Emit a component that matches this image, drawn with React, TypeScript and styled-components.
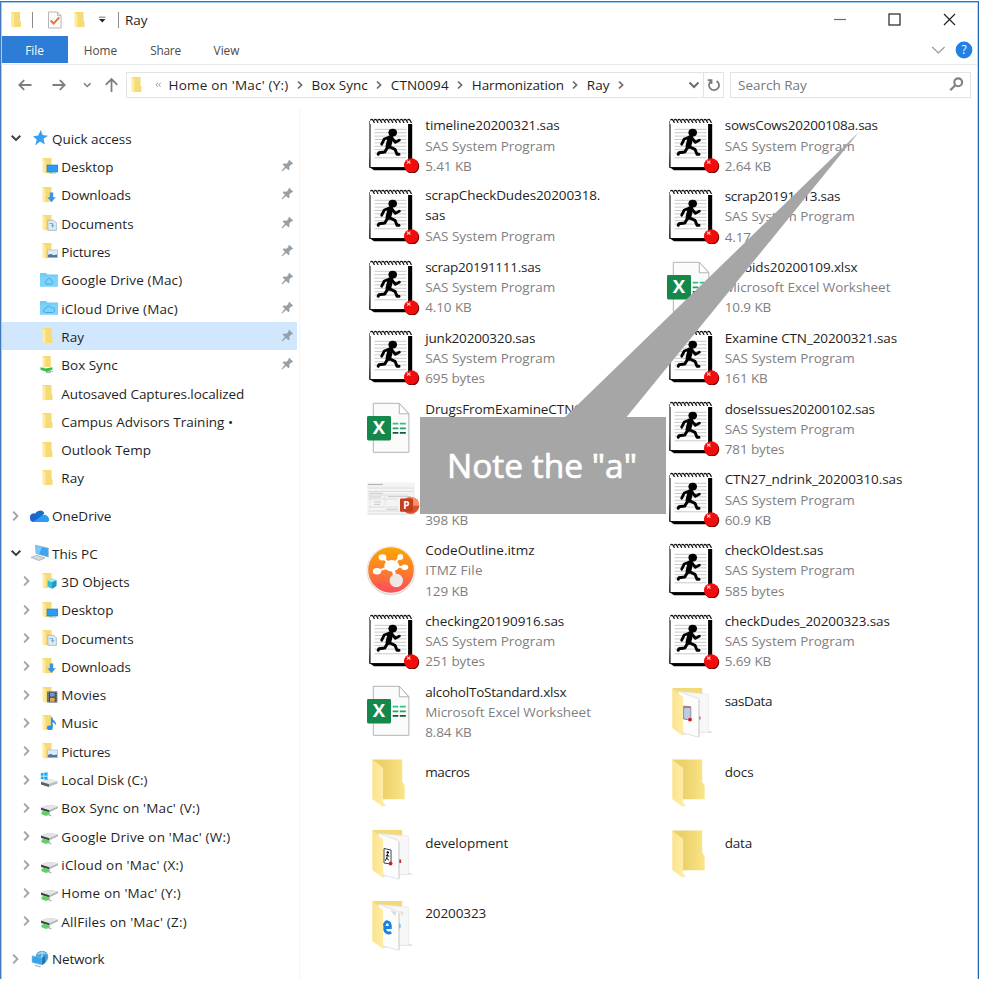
import React from 'react';
import styled, { createGlobalStyle } from 'styled-components';

const GlobalStyle = createGlobalStyle`
  * { box-sizing: border-box; }
  body { margin: 0; background: #fff; overflow: hidden; }
  svg { display: block; flex: none; }
`;

const Page = styled.div`
  width: 981px;
  height: 981px;
  padding: 1px 2px 2px 0;
  background: #fff;
  font-family: 'Open Sans', 'Noto Sans', sans-serif;
  font-size: 13.5px;
  color: #1f1f1f;
`;

const Window = styled.div`
  position: relative;
  height: 978px;
  display: flex;
  flex-direction: column;
  overflow: hidden;
  background: #fff;
  border-top: 1px solid #3170b3;
  border-left: 1px solid #4479bb;
  border-right: 1px solid #2465b0;
  box-shadow: inset 1px 1px 0 #a3cdf5, inset -1px 0 0 #b9dcfa;
`;

const Label = styled.span<{ $ls?: number }>`
  white-space: pre;
  letter-spacing: ${p => p.$ls ?? 0}px;
`;

/* ---------- title bar ---------- */

const TitleBar = styled.header`
  height: 34px;
  display: flex;
  align-items: center;
  padding: 2px 21px 0 9px;
`;

const Divider = styled.span`
  width: 1px;
  height: 16px;
  background: #8c8c8c;
`;

const QuickTools = styled.div`
  display: flex;
  align-items: center;
  flex: 1;
`;

const ToolSlot = styled.span<{ $w: number; $indent?: number }>`
  width: ${p => p.$w}px;
  padding-left: ${p => p.$indent ?? 0}px;
  display: flex;
  align-items: center;
`;

const WindowControls = styled.div`
  display: flex;
  gap: 41px;
  align-items: center;
  padding-bottom: 1px;
`;

/* ---------- ribbon ---------- */

const Ribbon = styled.nav`
  height: 29px;
  display: flex;
  align-items: center;
  border-bottom: 1px solid #e8e9ea;
  padding: 0 4px 1px 1px;
  font-size: 11.8px;
  color: #4b4b4b;
  margin-right: 1px;
`;

const FileTab = styled.div`
  width: 66px;
  height: 27px;
  display: flex;
  align-items: center;
  justify-content: center;
  padding-right: 1px;
  background: #2d7dd7;
  color: #fff;
`;

const Tab = styled.div<{ $w: number }>`
  width: ${p => p.$w}px;
  text-align: center;
  padding-top: 1px;
`;

const RibbonEnd = styled.div`
  margin-left: auto;
  display: flex;
  align-items: center;
  gap: 9px;
`;

/* ---------- address row ---------- */

const AddressRow = styled.div`
  height: 42px;
  display: flex;
  align-items: center;
  padding: 0 6px 3px 0;
`;

const NavButtons = styled.div`
  width: 125px;
  padding-left: 16px;
  display: flex;
  align-items: center;
`;

const AddressBox = styled.div`
  width: 598px;
  height: 26px;
  display: flex;
  align-items: center;
  border: 1px solid #e3e3e3;
`;

const Crumb = styled.span`
  display: flex;
  align-items: center;
  line-height: 24px;
`;

const CrumbSeparator = styled.span`
  width: 23px;
  display: flex;
  justify-content: center;
  padding-top: 1px;
`;

const AddressEnd = styled.div`
  margin-left: auto;
  display: flex;
  align-items: center;
  height: 100%;
`;

const RefreshCell = styled.div`
  width: 20px;
  height: 100%;
  margin-left: 3px;
  display: flex;
  align-items: center;
  justify-content: center;
  border-left: 1px solid #e3e3e3;
`;

const SearchBox = styled.div`
  width: 241px;
  height: 26px;
  margin-left: 6px;
  padding: 0 6px 0 7px;
  display: flex;
  align-items: center;
  justify-content: space-between;
  border: 1px solid #e3e3e3;
  color: #787878;
`;

/* ---------- body ---------- */

const Body = styled.div`
  flex: 1;
  min-height: 0;
  display: flex;
`;

const Sidebar = styled.aside`
  width: 299px;
  border-right: 1px solid #f3f5f7;
  padding: 16.4px 2px 0 1px;
`;

const TreeGroup = styled.div`
  margin-bottom: 9.2px;
`;

const TreeRow = styled.div<{ $level: number; $selected?: boolean }>`
  height: 28.33px;
  display: flex;
  align-items: center;
  padding: 2px 3px 0 ${p => (p.$level ? 18.5 : 7)}px;
  background: ${p => (p.$selected ? '#d0e7fe' : 'transparent')};
`;

const ChevronSlot = styled.span<{ $level: number }>`
  width: ${p => (p.$level ? 19.5 : 21)}px;
  padding-left: ${p => (p.$level ? 0 : 1)}px;
  padding-bottom: 1px;
`;

const TreeIcon = styled.span<{ $level: number }>`
  width: ${p => (p.$level ? 21.3 : 22)}px;
  padding-bottom: 1px;
`;

const PinSlot = styled.span`
  margin-left: auto;
  padding-bottom: 3px;
`;

const FileArea = styled.main`
  display: grid;
  grid-template-columns: 299.5px 299.5px;
  grid-auto-rows: 70.8px;
  padding: 3.1px 0 0 66px;
`;

const FileItem = styled.div`
  display: flex;
  padding-top: 6.9px;
  gap: 5.2px;
`;

const FileText = styled.div<{ $folder?: boolean }>`
  margin-top: ${p => (p.$folder ? 7.6 : -1.6)}px;
  line-height: 20.2px;
`;

const FileName = styled.div<{ $wrapped?: boolean }>`
  line-height: ${p => (p.$wrapped ? 19.7 : 20.2)}px;
`;

const Meta = styled.div`
  color: #7f7f7f;
`;

/* ---------- callout ---------- */

const Callout = styled.div`
  position: absolute;
  left: 419px;
  top: 130px;
  width: 440px;
  height: 382px;
  pointer-events: none;
`;

const Pointer = styled.svg`
  position: absolute;
  inset: 0;
`;

const CalloutBox = styled.div`
  position: absolute;
  left: 0;
  bottom: 0;
  width: 246px;
  height: 97px;
  display: flex;
  align-items: center;
  justify-content: center;
  padding: 0 2px 2px 0;
  background: #a6a6a6;
  color: #fff;
  font-size: 33.5px;
  -webkit-text-stroke: 0.7px #fff;
`;

/* ---------- icons ---------- */

const FolderShape = () => (
  <g>
    <path d="M2.5 1h9v8.5l1 1.5v5h-8z" fill="#f5da75" />
    <path d="M2.5 1l3 2.2V17l-3-1.8z" fill="#fdeb9f" />
  </g>
);

const Svg18 = ({ children }: { children?: React.ReactNode }) => (
  <svg width="18" height="18" viewBox="0 0 18 18">{children}</svg>
);

const treeIcons: Record<string, React.ReactNode> = {
  folder: <FolderShape />,
  desktop: (
    <>
      <FolderShape />
      <rect x="7" y="8" width="11" height="7" fill="#2b9bf4" stroke="#1b7bd0" strokeWidth=".6" />
      <path d="M9 16h7" stroke="#6fa8d8" strokeWidth=".8" />
    </>
  ),
  downloads: (
    <>
      <FolderShape />
      <path d="M9.8 6.5h3.4v4.7h2.6L11.5 16 7.2 11.2h2.6z" fill="#3a93e6" />
    </>
  ),
  documents: (
    <>
      <FolderShape />
      <path d="M7.8 6.3h6l2.6 2.6v7.4H7.8z" fill="#e3e9ee" stroke="#a5b0b8" strokeWidth=".8" />
      <path d="M9.5 9.5h3.2M11.2 11.500h3M12.600 9.500v4" stroke="#63b3e2" strokeWidth="1.2" />
    </>
  ),
  pictures: (
    <>
      <FolderShape />
      <rect x="7.5" y="8" width="10" height="7.6" fill="#d9ebfb" stroke="#b6c0c8" strokeWidth=".8" />
      <path d="M8 15.2v-2.400l3.200-.8 2.300 1.200 3.500-.8v2.800z" fill="#54748f" />
    </>
  ),
  cube: (
    <>
      <FolderShape />
      <path d="M12 6.5l4.4 1.8v5.8L12 16.8l-4.4-2.5V8.4z" fill="#35bdd9" />
      <path d="M12 6.5l4.4 1.8L12 10.2 7.6 8.4z" fill="#a3e8f3" />
      <path d="M12 10.2l4.4-1.9v5.8L12 16.8z" fill="#1c9cbf" />
    </>
  ),
  movies: (
    <>
      <FolderShape />
      <rect x="7.3" y="5.5" width="10" height="11" fill="#44484f" />
      <path d="M8.4 6v10M16.2 6v10" stroke="#a8a8a8" strokeWidth="1" strokeDasharray="1.2 1" />
      <rect x="10" y="6.6" width="4.7" height="4" fill="#6f96d5" />
      <rect x="10" y="11.8" width="4.7" height="4" fill="#dfaa45" />
    </>
  ),
  music: (
    <>
      <FolderShape />
      <path d="M11.8 3.5v9.7" stroke="#2d90ea" strokeWidth="1.8" />
      <path d="M11.2 3c.6 3 5.6 3.6 4.9 8.6-1-2.4-2.6-3.4-4.9-4.2z" fill="#2d90ea" />
      <ellipse cx="9.8" cy="13.7" rx="2.9" ry="2.3" fill="#2d90ea" />
    </>
  ),
  gdrive: (
    <>
      <path d="M0 2h6l1.5 1.5H18V15.500H0z" fill="#6fcdf8" />
      <path d="M0 5.500h18v10H0z" fill="#7dd3fb" />
      <path d="M8 7.500h2.200l2.800 4-1.100 1.600H6.300l-1.100-1.800z" fill="none" stroke="#48aadf" strokeWidth="1" />
    </>
  ),
  icloud: (
    <>
      <path d="M0 2h6l1.5 1.5H18V15.500H0z" fill="#6fcdf8" />
      <path d="M0 5.500h18v10H0z" fill="#7dd3fb" />
      <path d="M5.5 13.500a2 2 0 0 1 .2-4 3 3 0 0 1 5.6-.8 2.5 2.5 0 0 1 1.6 4.8z" fill="none" stroke="#48aadf" strokeWidth="1" />
    </>
  ),
  boxsync: (
    <>
      <path d="M2.8 0h8v11h-8z" fill="#f5da75" />
      <path d="M2.8 0l2.5 2v11.5l-2.5-2z" fill="#fdeb9f" />
      <path d="M.5 11.200l5 1.400L12.500 11.200v2.400L7 16 .5 13.800z" fill="#38bd49" />
      <path d="M8 15.400h5M6 16.600h5" stroke="#aab2b7" strokeWidth="1" />
    </>
  ),
  star: <path d="M10.8 1l1.8 5 5.4.7-4.5 3.1 1.4 5.6-4.8-2.8-4.9 3.9 1.6-5.8L3 7.3l5.2-.7z" fill="#36a0f2" />,
  onedrive: (
    <>
      <path d="M5 7.5A5.2 5.2 0 0 1 14.4 6l-3 4L3 12z" fill="#1470c8" />
      <path d="M0 11a4 4 0 0 1 6-4.2l9 6L3.5 15A3.9 3.9 0 0 1 0 11z" fill="#1b66cf" />
      <path d="M3 15l8.7-6.3A4.3 4.3 0 0 1 18.6 11a2.4 2.4 0 0 1-1.3 4z" fill="#2b9df0" />
    </>
  ),
  pc: (
    <>
      <path d="M5.5 1.2l12.8 3V13L6 9.6z" fill="#3ba5ee" stroke="#8aa6ba" strokeWidth=".6" />
      <path d="M6 1.8l6 1.4L9 10.2 6.4 9.4z" fill="#7cc9fb" />
      <path d="M1 13.4l6-2 8 2.6-6 2.5z" fill="#d2d8dc" stroke="#9ba5ac" strokeWidth=".7" />
    </>
  ),
  network: (
    <>
      <circle cx="12" cy="7" r="6.200" fill="#4aa3d8" />
      <path d="M8 4.5c2-2.3 5-2 7.5-.8M12 1.2v8" stroke="#b9def2" strokeWidth="1.2" fill="none" />
      <path d="M2 5.8l10 2V15L2 12.4z" fill="#37a4ea" stroke="#8ec9ee" strokeWidth=".6" />
      <path d="M12 7.8l3.4-2.2V13L12 15z" fill="#2178b5" />
      <path d="M5 15.5l5.5 1.3" stroke="#a9b3b9" strokeWidth="1.2" />
    </>
  ),
  disk: (
    <>
      <path d="M1 10.5L9 8l8.5 2.2v2.4L9 15.8l-8-2.4z" fill="#b9bcbf" />
      <path d="M1 10.3L9 8l8.5 2L9 13z" fill="#e9eaeb" />
      <path d="M1 11l8 2.3v2.6l-8-2.4z" fill="#5c6166" />
      <path d="M.8 2.2l2.8-.4v3H.8zM4.2 1.7l3.4-.5v3.6H4.2zM.8 5.4h2.8v3L.8 8zM4.2 5.4h3.4V9l-3.4-.5z" fill="#19aef0" />
    </>
  ),
  netdrive: (
    <>
      <path d="M1 8.200L9 6l9 1.300v2L9.200 13.600 1 11z" fill="#b5b8ba" />
      <path d="M1 8.400L9 6l9 1.300-8.800 3.900z" fill="#e4e5e6" />
      <path d="M1 8.800l8.200 2.400v2L1 10.800z" fill="#3c4043" />
      <path d="M1.500 13l2-1.200 6.300 1.800v1.800L6 17l-4.500-1.800z" fill="#62d069" />
      <path d="M8.500 16l3 .8" stroke="#b0b5b8" strokeWidth="1.2" />
    </>
  ),
};

const Chevron = ({ open }: { open?: boolean }) =>
  open ? (
    <svg width="12" height="12" viewBox="0 0 12 12">
      <path d="M1.7 3.8L6 8l4.3-4.2" fill="none" stroke="#3b3b3b" strokeWidth="1.9" />
    </svg>
  ) : (
    <svg width="12" height="12" viewBox="0 0 12 12">
      <path d="M3.2 1.7L7.4 6l-4.2 4.3" fill="none" stroke="#a3a3a3" strokeWidth="1.9" />
    </svg>
  );

const Pin = () => (
  <svg width="13" height="13" viewBox="0 0 13 13">
    <path d="M8.2.7l4 4-1.4.9-.5-.2-2 2.2.2 2.7-1 1-2.4-2.4L1.2 12.4l-.6-.6 3.3-4L1.6 5.5l1-1 2.9.2 2-2-.2-.7z" fill="#96a0a9" />
  </svg>
);

const SasIcon = () => (
  <svg width="54" height="56" viewBox="0 0 54 56">
    <path d="M5 6h41.200v47.300H8L3.300 50z" fill="#000" />
    <path d="M4 4.500h38.600v46H4z" fill="#fff" stroke="#111" strokeWidth="1.1" />
    <path
      d="M8.500 12.300h32M8.500 15.700h32M8.500 19.100h32M8.500 22.500h32M8.500 25.900h32M8.500 29.300h32M8.500 32.700h32M8.500 36.100h32M8.500 40.800h32"
      stroke="#c9c9c9"
      strokeWidth="1"
    />
    <path d="M4 4.600h43" stroke="#fff" strokeWidth="5" />
    {Array.from({ length: 11 }, (_, i) => (
      <path key={i} d={`M${4.400 + i * 3.700} 3.400q1.400-2.200 2.700 0t1.300 2.700`} fill="none" stroke="#111" strokeWidth="1.15" />
    ))}
    <ellipse cx="26.700" cy="15.600" rx="4.300" ry="3.900" fill="#000" />
    <g fill="none" stroke="#000" strokeLinecap="round" strokeLinejoin="round">
      <path d="M24.400 21L22.400 29" strokeWidth="5.600" />
      <path d="M22.800 20.300l-4.500 1.700-2.600 5.200M25.600 20.600l3.800 4.800 4-2.300" strokeWidth="2.800" />
      <path d="M23 29.500l6 2.800 2 5h2M22 29.500l-3.200 5.600-5.800.6-.8 1.500" strokeWidth="3" />
    </g>
    <circle cx="46" cy="49.400" r="7.200" fill="#650000" />
    <circle cx="45.200" cy="48.400" r="7.200" fill="#f40b0b" />
    <path d="M40.900 43.600l3.600 3M44.300 43.700l-3.200 2.900" stroke="#ffd5d5" strokeWidth="1.100" />
  </svg>
);

const ExcelIcon = () => (
  <svg width="54" height="56" viewBox="0 0 54 56">
    <path d="M7.3 3.3h26l9.600 10.500v38.500H7.300z" fill="#fbfbfb" stroke="#b2b2b2" />
    <path d="M33.300 3.300v10.500h9.600z" fill="#fff" stroke="#b2b2b2" />
    <rect x="1" y="16" width="24" height="24.400" rx="1.400" fill="#14884a" />
    <text x="13" y="34.400" textAnchor="middle" fontSize="18.500" fontWeight="700" fill="#fff">X</text>
    <path d="M26.700 23.700h5.600M33.800 23.700h6" stroke="#2cc481" strokeWidth="1.800" />
    <path d="M26.700 28.300h5.600M33.800 28.300h6" stroke="#20a366" strokeWidth="1.800" />
    <path d="M26.700 32.900h5.600M33.800 32.900h6" stroke="#145b38" strokeWidth="1.800" />
  </svg>
);

const PowerPointIcon = () => (
  <svg width="54" height="56" viewBox="0 0 54 56">
    <path d="M1 11.500h48v32.500H1z" fill="#f4f4f4" />
    <path d="M2 13.500h15" stroke="#b5b5b5" strokeWidth="1.200" />
    <path d="M2 17h46M2 20.500h46M2 24h40M2 28h30M2 36h30M2 40h46M2 43h46" stroke="#dadada" strokeWidth=".9" />
    <path d="M3 22.300h14M22 25.600h22M3 26h12M8 31h7M8 33.400h6M20 38.300h12" stroke="#c0c0c0" strokeWidth=".8" />
    <path d="M4 20v18M19 24v10" stroke="#e0e0e0" strokeWidth=".8" />
    <circle cx="44.600" cy="34.400" r="8.700" fill="#ee6c47" />
    <path d="M44.600 25.700a8.700 8.700 0 0 1 8.700 8.700h-8.700z" fill="#ff8f6b" />
    <path d="M36 35h17.200a8.700 8.700 0 0 1-17.200 0z" fill="#d35230" />
    <rect x="34" y="27.500" width="13" height="13.300" rx="1" fill="#c43e1c" />
    <text x="40.400" y="38" textAnchor="middle" fontSize="10" fontWeight="700" fill="#fff">P</text>
  </svg>
);

const MindMapIcon = () => (
  <svg width="54" height="56" viewBox="0 0 54 56">
    <defs>
      <linearGradient id="mindmap" x1="0" y1="0" x2="0" y2="1">
        <stop offset="0" stopColor="#fda501" />
        <stop offset=".55" stopColor="#fb7c2e" />
        <stop offset="1" stopColor="#fd4a5e" />
      </linearGradient>
    </defs>
    <circle cx="25" cy="28.600" r="24.400" fill="#d5d5d5" />
    <circle cx="25" cy="28" r="24" fill="#f1eeec" />
    <circle cx="25" cy="28" r="22.800" fill="url(#mindmap)" />
    <g stroke="#fff" strokeWidth="2">
      <path d="M25.700 24L16.700 15.500M25.700 24l8.600-9M25.700 24l13 1.200M25.700 24L11 29.200" />
      <path d="M26 24l4 14" strokeWidth="3" />
    </g>
    <g fill="#fff">
      <ellipse cx="25.700" cy="23.700" rx="7.400" ry="5.800" />
      <ellipse cx="16.500" cy="15.300" rx="3.900" ry="3.100" />
      <circle cx="34.300" cy="14.900" r="2.900" />
      <ellipse cx="38.700" cy="25.200" rx="3.500" ry="2.700" />
      <ellipse cx="11" cy="29.200" rx="4.100" ry="3.300" />
      <circle cx="30.300" cy="38.500" r="6.700" fill="#eee7e4" />
    </g>
  </svg>
);

type FolderContent = 'none' | 'data' | 'runner' | 'edge';

const BigFolder = ({ content }: { content: FolderContent }) => (
  <svg width="54" height="56" viewBox="0 0 54 56">
    <defs>
      <linearGradient id="folderBack" x1="0" y1="0" x2="1" y2="0">
        <stop offset=".3" stopColor="#ecd068" />
        <stop offset="1" stopColor="#fae588" />
      </linearGradient>
      <linearGradient id="folderFlap" x1="0" y1="0" x2="1" y2="0">
        <stop offset="0" stopColor="#fbe38b" />
        <stop offset="1" stopColor="#feeda6" />
      </linearGradient>
    </defs>
    <path d="M16 52.500l4-1-3-3z" fill="#e6e6e6" />
    {content === 'none' ? (
      <path d="M6.500 5.600h29.700v22.200l2.500 3.600v13.800H14z" fill="url(#folderBack)" />
    ) : (
      <>
        <path d="M6.500 5h29.700v12H8z" fill="#f3da79" />
        <path d="M32 49.700h15l-3-2z" fill="#dedede" />
        <path d="M14 8.600l28.600 2.600v38.200H20z" fill="#f7f7f7" stroke="#e3e3e3" strokeWidth=".6" />
        {content === 'edge' && <path d="M33 15l3.500 5 1.500-4z" fill="#e2e2e2" />}
        <path d="M12 8l20.600 7.600v38.600L17 50z" fill="#fdfdfd" stroke="#dcdcdc" strokeWidth=".8" />
        <path d="M33.300 17v37" stroke="#dadada" strokeWidth="1.100" />
      </>
    )}
    {content === 'runner' && (
      <>
        <path d="M18 23.500l7 1.500v14l-7-1z" fill="#fff" stroke="#444" strokeWidth="1" />
        <circle cx="21.800" cy="27.400" r="1.200" />
        <path d="M21.600 29l-.8 4M19.800 30.200l3.600 1M20.800 33l1.800 2.400M20.600 33l-1.200 2.800" stroke="#111" strokeWidth="1" />
        <circle cx="24.600" cy="38.500" r="1.900" fill="#e8141b" />
        <path d="M34.200 34.500v3.500" stroke="#b5333a" strokeWidth="1.800" />
      </>
    )}
    {content === 'data' && (
      <>
        <path d="M17.600 23l7.200.8v13.400l-7.200-1.200z" fill="#b9cbe6" stroke="#93717c" strokeWidth=".8" />
        <path d="M17.600 24.300h7" stroke="#b86670" strokeWidth="1.200" />
        <circle cx="24" cy="36.600" r="1.900" fill="#d9171f" />
        <path d="M33.800 33.500v3" stroke="#cf6b70" strokeWidth="1.500" />
      </>
    )}
    {content === 'edge' && (
      <>
        <path d="M18.300 29.800c.3-5.600 6.300-5.600 6 1.700h-5.500c-.4 4.800 3 6.600 6.400 4.800" fill="none" stroke="#1683e0" strokeWidth="2.900" />
        <path d="M33.400 27c1.700 1.400 1.700 4 0 6z" fill="#59abeb" />
        <path d="M24 14l5.200 6.600 1-4.600z" fill="#dcdcdc" />
      </>
    )}
    <path d="M6.300 5.400L17 14v39L6.300 45z" fill="url(#folderFlap)" />
  </svg>
);

/* ---------- data ---------- */

type TreeNode = { label: string; icon: string; ls?: number; pinned?: boolean; selected?: boolean };

const quickAccess: TreeNode[] = [
  { label: 'Desktop', icon: 'desktop', pinned: true },
  { label: 'Downloads', icon: 'downloads', ls: -0.1, pinned: true },
  { label: 'Documents', icon: 'documents', pinned: true },
  { label: 'Pictures', icon: 'pictures', ls: -0.2, pinned: true },
  { label: 'Google Drive (Mac)', icon: 'gdrive', ls: 0.14, pinned: true },
  { label: 'iCloud Drive (Mac)', icon: 'icloud', ls: 0.13, pinned: true },
  { label: 'Ray', icon: 'folder', pinned: true, selected: true },
  { label: 'Box Sync', icon: 'boxsync', pinned: true },
  { label: 'Autosaved Captures.localized', icon: 'folder', ls: -0.06 },
  { label: 'Campus Advisors Training •', icon: 'folder' },
  { label: 'Outlook Temp', icon: 'folder' },
  { label: 'Ray', icon: 'folder' },
];

const thisPc: TreeNode[] = [
  { label: '3D Objects', icon: 'cube' },
  { label: 'Desktop', icon: 'desktop' },
  { label: 'Documents', icon: 'documents' },
  { label: 'Downloads', icon: 'downloads', ls: -0.1 },
  { label: 'Movies', icon: 'movies', ls: 0.1 },
  { label: 'Music', icon: 'music' },
  { label: 'Pictures', icon: 'pictures', ls: -0.2 },
  { label: 'Local Disk (C:)', icon: 'disk' },
  { label: "Box Sync on 'Mac' (V:)", icon: 'netdrive', ls: 0.17 },
  { label: "Google Drive on 'Mac' (W:)", icon: 'netdrive', ls: 0.2 },
  { label: "iCloud on 'Mac' (X:)", icon: 'netdrive', ls: 0.19 },
  { label: "Home on 'Mac' (Y:)", icon: 'netdrive', ls: 0.19 },
  { label: "AllFiles on 'Mac' (Z:)", icon: 'netdrive', ls: 0.19 },
];

type Entry = {
  kind: 'sas' | 'xlsx' | 'pptx' | 'itmz' | 'folder';
  name: string[];
  ls?: number;
  size?: string;
  content?: FolderContent;
};

const typeNames = {
  sas: { text: 'SAS System Program', ls: -0.03 },
  xlsx: { text: 'Microsoft Excel Worksheet', ls: -0.03 },
  pptx: { text: ' ', ls: 0 },
  itmz: { text: 'ITMZ File', ls: 0.17 },
};

const entries: Entry[] = [
  { kind: 'sas', name: ['timeline20200321.sas'], ls: -0.11, size: '5.41 KB' },
  { kind: 'sas', name: ['sowsCows20200108a.sas'], ls: -0.24, size: '2.64 KB' },
  { kind: 'sas', name: ['scrapCheckDudes20200318.', 'sas'], ls: -0.11 },
  { kind: 'sas', name: ['scrap20191113.sas'], ls: -0.26, size: '4.17 KB' },
  { kind: 'sas', name: ['scrap20191111.sas'], ls: -0.26, size: '4.10 KB' },
  { kind: 'xlsx', name: ['opioids20200109.xlsx'], ls: -0.13, size: '10.9 KB' },
  { kind: 'sas', name: ['junk20200320.sas'], ls: -0.17, size: '695 bytes' },
  { kind: 'sas', name: ['Examine CTN_20200321.sas'], ls: -0.11, size: '161 KB' },
  { kind: 'xlsx', name: ['DrugsFromExamineCTN9'], ls: -0.07 },
  { kind: 'sas', name: ['doseIssues20200102.sas'], ls: -0.23, size: '781 bytes' },
  { kind: 'pptx', name: [' '], size: '398 KB' },
  { kind: 'sas', name: ['CTN27_ndrink_20200310.sas'], ls: -0.09, size: '60.9 KB' },
  { kind: 'itmz', name: ['CodeOutline.itmz'], size: '129 KB' },
  { kind: 'sas', name: ['checkOldest.sas'], ls: -0.15, size: '585 bytes' },
  { kind: 'sas', name: ['checking20190916.sas'], ls: -0.08, size: '251 bytes' },
  { kind: 'sas', name: ['checkDudes_20200323.sas'], ls: -0.12, size: '5.69 KB' },
  { kind: 'xlsx', name: ['alcoholToStandard.xlsx'], ls: -0.22, size: '8.84 KB' },
  { kind: 'folder', name: ['sasData'], ls: -0.35, content: 'data' },
  { kind: 'folder', name: ['macros'], ls: -0.34 },
  { kind: 'folder', name: ['docs'], ls: -0.1 },
  { kind: 'folder', name: ['development'], content: 'runner' },
  { kind: 'folder', name: ['data'], ls: -0.2 },
  { kind: 'folder', name: ['20200323'], ls: -0.09, content: 'edge' },
];

const crumbs = [
  { text: "Home on 'Mac' (Y:)", ls: 0.21 },
  { text: 'Box Sync', ls: 0 },
  { text: 'CTN0094', ls: 0.15 },
  { text: 'Harmonization', ls: -0.13 },
  { text: 'Ray', ls: 0 },
];

/* ---------- parts ---------- */

const FileIcon = ({ entry }: { entry: Entry }) => {
  switch (entry.kind) {
    case 'sas': return <SasIcon />;
    case 'xlsx': return <ExcelIcon />;
    case 'pptx': return <PowerPointIcon />;
    case 'itmz': return <MindMapIcon />;
    default: return <BigFolder content={entry.content ?? 'none'} />;
  }
};

const File = ({ entry }: { entry: Entry }) => (
  <FileItem>
    <FileIcon entry={entry} />
    <FileText $folder={entry.kind === 'folder'}>
      {entry.name.map(line => (
        <FileName key={line} $wrapped={entry.name.length > 1}>
          <Label $ls={entry.ls}>{line}</Label>
        </FileName>
      ))}
      {entry.kind !== 'folder' && (
        <Meta><Label $ls={typeNames[entry.kind].ls}>{typeNames[entry.kind].text}</Label></Meta>
      )}
      {entry.size && <Meta><Label $ls={-0.1}>{entry.size}</Label></Meta>}
    </FileText>
  </FileItem>
);

const Root = ({ label, icon, open, ls }: { label: string; icon: string; open?: boolean; ls?: number }) => (
  <TreeRow $level={0}>
    <ChevronSlot $level={0}><Chevron open={open} /></ChevronSlot>
    <TreeIcon $level={0}>
      <svg width="19" height="18" viewBox="0 0 19 18">{treeIcons[icon]}</svg>
    </TreeIcon>
    <Label $ls={ls}>{label}</Label>
  </TreeRow>
);

const Child = ({ node, expandable }: { node: TreeNode; expandable?: boolean }) => (
  <TreeRow $level={1} $selected={node.selected}>
    <ChevronSlot $level={1}>{expandable && <Chevron />}</ChevronSlot>
    <TreeIcon $level={1}><Svg18>{treeIcons[node.icon]}</Svg18></TreeIcon>
    <Label $ls={node.ls}>{node.label}</Label>
    {node.pinned && <PinSlot><Pin /></PinSlot>}
  </TreeRow>
);

export default function App() {
  return (
    <Page>
      <GlobalStyle />
      <Window>
        <TitleBar>
          <QuickTools>
            <ToolSlot $w={22}>
              <svg width="18" height="18" viewBox="1.5 0 18 18"><FolderShape /></svg>
            </ToolSlot>
            <Divider />
            <ToolSlot $w={39}>
              <svg width="30" height="18" viewBox="0 0 30 18">
                <path d="M15.5 1h9l3.6 3.6V17H15.5z" fill="#fbfbfb" stroke="#b8b8b8" />
                <path d="M24.5 1v3.6h3.6" fill="none" stroke="#b8b8b8" />
                <path d="M17.6 9.6l3 3 5.6-6.2" fill="none" stroke="#ee7436" strokeWidth="2.1" />
              </svg>
            </ToolSlot>
            <ToolSlot $w={26}><Svg18><FolderShape /></Svg18></ToolSlot>
            <ToolSlot $w={20}>
              <svg width="9" height="8" viewBox="0 0 9 8">
                <path d="M1 1.2h6.5" stroke="#8a8a8a" strokeWidth="1.2" />
                <path d="M1 3h6.5L4.25 6.6z" fill="#222" />
              </svg>
            </ToolSlot>
            <ToolSlot $w={7}><Divider /></ToolSlot>
            <Label>Ray</Label>
          </QuickTools>
          <WindowControls>
            <svg width="13" height="14" viewBox="0 0 13 14"><path d="M0 6.500h12" stroke="#6b6b6b" strokeWidth="1.2" /></svg>
            <svg width="14" height="14" viewBox="0 0 14 14"><rect x="1" y="1" width="11" height="11" fill="none" stroke="#222" strokeWidth="1.200" /></svg>
            <svg width="14" height="14" viewBox="0 0 14 14"><path d="M1 1l11 11M12 1L1 12" stroke="#222" strokeWidth="1.200" /></svg>
          </WindowControls>
        </TitleBar>

        <Ribbon>
          <FileTab>File</FileTab>
          <Tab $w={65}>Home</Tab>
          <Tab $w={65}><Label $ls={-0.2}>Share</Label></Tab>
          <Tab $w={57}>View</Tab>
          <RibbonEnd>
            <svg width="15" height="10" viewBox="0 0 15 10"><path d="M1.200 2l6.200 6 6.200-6" fill="none" stroke="#9a9a9a" strokeWidth="1.200" /></svg>
            <svg width="18" height="18" viewBox="0 0 18 18">
              <circle cx="9" cy="9" r="8.400" fill="#2180e2" />
              <text x="9" y="13.400" textAnchor="middle" fontSize="12" fill="#fff">?</text>
            </svg>
          </RibbonEnd>
        </Ribbon>

        <AddressRow>
          <NavButtons>
            <svg width="102" height="18" viewBox="0 0 102 18" fill="none" stroke="#7e7e7e" strokeWidth="1.800">
              <path d="M14.500 9H2.500M7.200 4.200L2.300 9l4.900 4.800" />
              <path d="M35.500 9h12M42.800 4.200L47.700 9l-4.900 4.800" />
              <path d="M67 7.300l3.300 3.200 3.300-3.200" strokeWidth="1.600" />
              <path d="M94.500 16V3M88.700 8.800L94.500 3l5.800 5.800" />
            </svg>
          </NavButtons>
          <AddressBox>
            <ToolSlot $w={28} $indent={1.5}><Svg18><FolderShape /></Svg18></ToolSlot>
            <ToolSlot $w={13.5}>
              <svg width="7" height="6" viewBox="0 0 7 6"><path d="M2.800.8L1 2.800l1.800 2M5.600.8L3.800 2.800l1.800 2" fill="none" stroke="#8a8a8a" strokeWidth=".9" /></svg>
            </ToolSlot>
            {crumbs.map(c => (
              <Crumb key={c.text}>
                <Label $ls={c.ls}>{c.text}</Label>
                <CrumbSeparator>
                  <svg width="8" height="10" viewBox="0 0 8 10"><path d="M2 1.500L5.600 5 2 8.500" fill="none" stroke="#6b6b6b" strokeWidth="1.700" /></svg>
                </CrumbSeparator>
              </Crumb>
            ))}
            <AddressEnd>
              <svg width="12" height="10" viewBox="0 0 12 10"><path d="M1.500 2.500L6 7l4.500-4.500" fill="none" stroke="#6d6d6d" strokeWidth="2" /></svg>
              <RefreshCell>
                <svg width="14" height="14" viewBox="0 0 14 14" fill="none" stroke="#7a7a7a" strokeWidth="1.800">
                  <path d="M9.600 2.900a5 5 0 1 1-5.600.3" />
                  <path d="M4.500 6V2.200H.700" />
                </svg>
              </RefreshCell>
            </AddressEnd>
          </AddressBox>
          <SearchBox>
            <Label>Search Ray</Label>
            <svg width="15" height="15" viewBox="0 0 15 15" fill="none" stroke="#808080">
              <circle cx="9.200" cy="5.300" r="3.900" strokeWidth="2.100" />
              <path d="M6.300 8.200L1.300 13.200" strokeWidth="2.200" />
            </svg>
          </SearchBox>
        </AddressRow>

        <Body>
          <Sidebar>
            <TreeGroup>
              <Root label="Quick access" icon="star" open ls={-0.05} />
              {quickAccess.map((n, i) => <Child key={i} node={n} />)}
            </TreeGroup>
            <TreeGroup><Root label="OneDrive" icon="onedrive" /></TreeGroup>
            <TreeGroup>
              <Root label="This PC" icon="pc" open />
              {thisPc.map(n => <Child key={n.label} node={n} expandable />)}
            </TreeGroup>
            <TreeGroup><Root label="Network" icon="network" ls={-0.18} /></TreeGroup>
          </Sidebar>
          <FileArea>
            {entries.map(e => <File key={e.name.join('') + e.kind} entry={e} />)}
          </FileArea>
        </Body>

        <Callout>
          <Pointer width="440" height="382" viewBox="0 0 440 382">
            <path d="M439 0L143 287h62z" fill="#a6a6a6" />
          </Pointer>
          <CalloutBox><Label>Note the "a"</Label></CalloutBox>
        </Callout>
      </Window>
    </Page>
  );
}
